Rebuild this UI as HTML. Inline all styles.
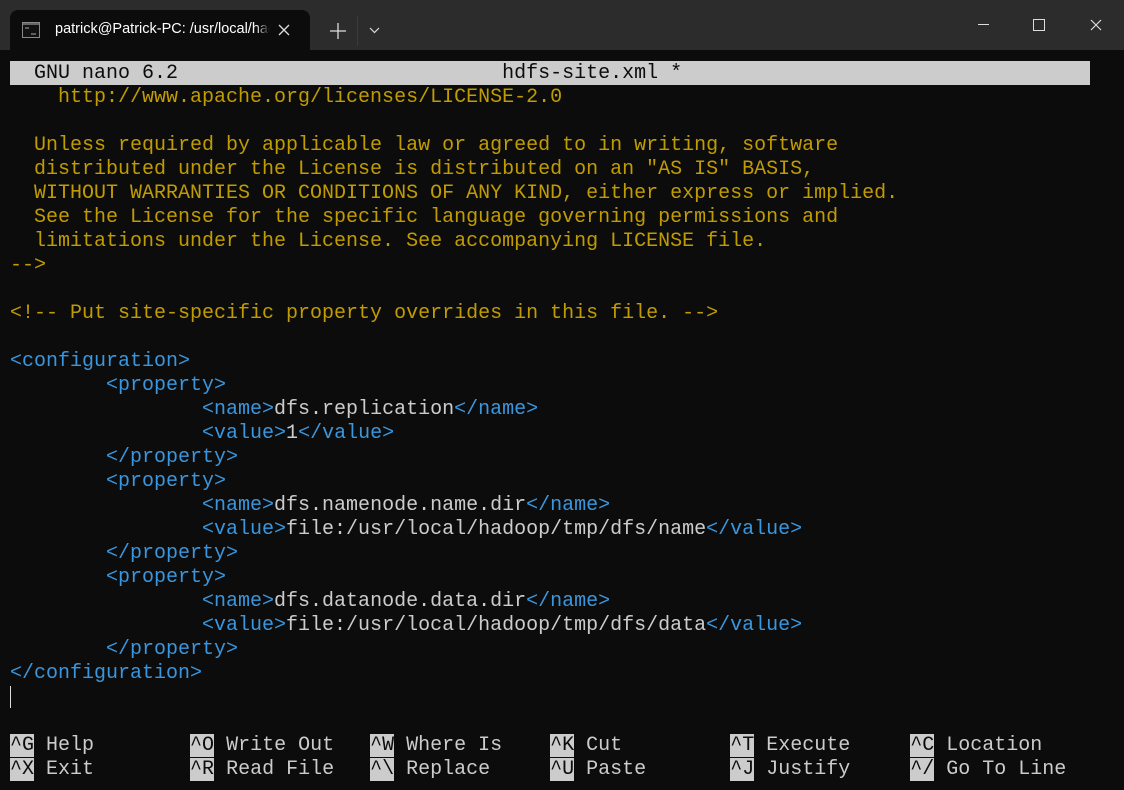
<!DOCTYPE html>
<html><head><style>
body{margin:0;width:1124px;height:790px;background:#0c0c0c;overflow:hidden;position:relative;font-family:"Liberation Sans",sans-serif}
#bar{position:absolute;left:0;top:0;width:1124px;height:50px;background:#2c2c2c}
#tab{position:absolute;left:10px;top:10px;width:300px;height:40px;background:#0c0c0c;border-radius:8px 8px 0 0}
#tab .t{position:absolute;left:45px;top:11px;width:215px;overflow:hidden;color:#fff;font-size:14.5px;white-space:nowrap}
pre{position:absolute;left:10px;top:62px;margin:0;font-family:"Liberation Mono",monospace;font-size:20px;line-height:24px;color:#cccccc}
.y{color:#c19c00}.b{color:#3a96dd}
.h{background:#cccccc;color:#0c0c0c}
</style></head><body>
<div id="bar">
<div id="tab">
<svg style="position:absolute;left:12px;top:12px" width="18" height="16"><rect x="0.5" y="0.5" width="17" height="15" fill="#111" stroke="#888"/><rect x="1" y="1" width="16" height="2" fill="#666"/><path d="M3 6h4M9 12h5" stroke="#aaa"/></svg>
<div class="t">patrick@Patrick-PC: /usr/local/hadoop</div>
<div style="position:absolute;left:245px;top:8px;width:15px;height:24px;background:linear-gradient(to right,rgba(12,12,12,0),#0c0c0c)"></div>
<svg style="position:absolute;left:268px;top:14px" width="12" height="12"><path d="M1 1L11 11M11 1L1 11" stroke="#ddd" stroke-width="1.3"/></svg>
</div>
<svg style="position:absolute;left:330px;top:23px" width="16" height="16"><path d="M8 0V16M0 8H16" stroke="#ddd" stroke-width="1.3"/></svg>
<div style="position:absolute;left:357px;top:16px;width:1px;height:30px;background:#3a3a3a"></div>
<svg style="position:absolute;left:369px;top:27px" width="11" height="7"><path d="M1 1L5.5 5.5L10 1" stroke="#ddd" fill="none" stroke-width="1.2"/></svg>
<div style="position:absolute;left:978px;top:24px;width:11px;height:1px;background:#ddd"></div>
<div style="position:absolute;left:1033px;top:19px;width:10px;height:10px;border:1px solid #ddd"></div>
<svg style="position:absolute;left:1090px;top:19px" width="12" height="12"><path d="M1 1L11 11M11 1L1 11" stroke="#ddd" stroke-width="1.2"/></svg>
</div>
<div style="position:absolute;left:10px;top:61px;width:1080px;height:24px;background:#cccccc"></div>
<pre><span style="color:#0c0c0c">  GNU nano 6.2                           hdfs-site.xml *</span>
<span class="y">    http://www.apache.org/licenses/LICENSE-2.0

  Unless required by applicable law or agreed to in writing, software
  distributed under the License is distributed on an "AS IS" BASIS,
  WITHOUT WARRANTIES OR CONDITIONS OF ANY KIND, either express or implied.
  See the License for the specific language governing permissions and
  limitations under the License. See accompanying LICENSE file.
--&gt;

&lt;!-- Put site-specific property overrides in this file. --&gt;</span>

<span class="b">&lt;configuration&gt;</span>
        <span class="b">&lt;property&gt;</span>
                <span class="b">&lt;name&gt;</span>dfs.replication<span class="b">&lt;/name&gt;</span>
                <span class="b">&lt;value&gt;</span>1<span class="b">&lt;/value&gt;</span>
        <span class="b">&lt;/property&gt;</span>
        <span class="b">&lt;property&gt;</span>
                <span class="b">&lt;name&gt;</span>dfs.namenode.name.dir<span class="b">&lt;/name&gt;</span>
                <span class="b">&lt;value&gt;</span>file:/usr/local/hadoop/tmp/dfs/name<span class="b">&lt;/value&gt;</span>
        <span class="b">&lt;/property&gt;</span>
        <span class="b">&lt;property&gt;</span>
                <span class="b">&lt;name&gt;</span>dfs.datanode.data.dir<span class="b">&lt;/name&gt;</span>
                <span class="b">&lt;value&gt;</span>file:/usr/local/hadoop/tmp/dfs/data<span class="b">&lt;/value&gt;</span>
        <span class="b">&lt;/property&gt;</span>
<span class="b">&lt;/configuration&gt;</span>


<span class="h">^G</span> Help        <span class="h">^O</span> Write Out   <span class="h">^W</span> Where Is    <span class="h">^K</span> Cut         <span class="h">^T</span> Execute     <span class="h">^C</span> Location
<span class="h">^X</span> Exit        <span class="h">^R</span> Read File   <span class="h">^\</span> Replace     <span class="h">^U</span> Paste       <span class="h">^J</span> Justify     <span class="h">^/</span> Go To Line</pre>
<div style="position:absolute;left:10px;top:686px;width:1px;height:22px;background:#ddd"></div>
</body></html>
